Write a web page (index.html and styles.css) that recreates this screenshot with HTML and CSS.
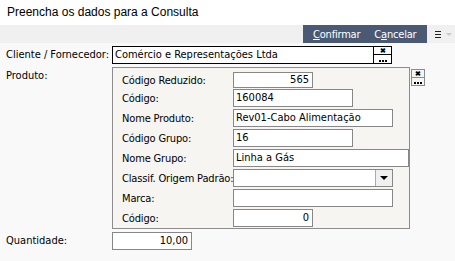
FILE: index.html
```html
<!DOCTYPE html>
<html lang="pt">
<head>
  <meta charset="UTF-8">
  <title>Preencha os dados para a Consulta</title>
  <link rel="stylesheet" href="styles.css">
</head>
<body>
  <div class="title">Preencha os dados para a Consulta</div>

  <div class="toolbar">
    <div class="actions">
      <button class="action"><u>C</u>onfirmar</button>
      <button class="action">C<u>a</u>ncelar</button>
    </div>
    <div class="menu">
      <span class="bars"></span>
      <span class="caret"></span>
    </div>
  </div>

  <div class="form">
    <div class="row">
      <label class="label">Cliente / Fornecedor:</label>
      <div class="lookup">
        <div class="lookup-text">Comércio e Representações Ltda</div>
        <div class="mini-btns">
          <button class="mini">&#x2716;</button>
          <button class="mini dots"><span class="dot-row"></span></button>
        </div>
      </div>
    </div>

    <div class="row product-row">
      <label class="label">Produto:</label>
      <div class="panel">
        <div class="prow first">
          <span class="plabel">Código Reduzido:</span>
          <div class="field num w80">565</div>
        </div>
        <div class="prow">
          <span class="plabel">Código:</span>
          <div class="field w120">160084</div>
        </div>
        <div class="prow">
          <span class="plabel">Nome Produto:</span>
          <div class="field w160">Rev01-Cabo Alimentação</div>
        </div>
        <div class="prow">
          <span class="plabel">Código Grupo:</span>
          <div class="field w120">16</div>
        </div>
        <div class="prow">
          <span class="plabel">Nome Grupo:</span>
          <div class="field w176">Linha a Gás</div>
        </div>
        <div class="prow">
          <span class="plabel">Classif. Origem Padrão:</span>
          <div class="field combo w160">
            <span class="combo-text"></span>
            <span class="drop"></span>
          </div>
        </div>
        <div class="prow">
          <span class="plabel">Marca:</span>
          <div class="field w160"></div>
        </div>
        <div class="prow">
          <span class="plabel">Código:</span>
          <div class="field num w80">0</div>
        </div>
      </div>
      <div class="mini-btns side">
        <button class="mini">&#x2716;</button>
        <button class="mini dots"><span class="dot-row"></span></button>
      </div>
    </div>

    <div class="row qty-row">
      <label class="label">Quantidade:</label>
      <div class="field num w80">10,00</div>
    </div>
  </div>
</body>
</html>
```

FILE: styles.css
```css
body {
  margin: 0;
  background: #f9f9f9;
  font-family: "DejaVu Sans", sans-serif;
  font-stretch: condensed;
  font-size: 11px;
  color: #000;
}
.title {
  height: 25px;
  line-height: 25px;
  padding-left: 7px;
  background: #fff;
  font-family: "Liberation Sans", Arial, sans-serif;
  font-stretch: normal;
  font-size: 12px;
}
.toolbar {
  height: 18px;
  background: #f0f0f0;
  display: flex;
  justify-content: flex-end;
}
.actions {
  background: #4a5a74;
  width: 124px;
  display: flex;
  gap: 14px;
  padding-left: 10px;
  box-sizing: border-box;
}
.action {
  background: none;
  border: none;
  color: #fff;
  font-family: "DejaVu Sans", sans-serif;
  font-stretch: condensed;
  font-size: 11px;
  letter-spacing: -0.2px;
  padding: 0;
  height: 18px;
  cursor: pointer;
}
.menu {
  width: 28px;
  display: flex;
  align-items: center;
  gap: 5px;
  padding-left: 8px;
  box-sizing: border-box;
}
.bars {
  width: 6px;
  height: 7px;
  background: linear-gradient(#222 0 1px, transparent 1px 3px, #222 3px 4px, transparent 4px 6px, #222 6px 7px);
}
.caret {
  width: 0;
  height: 0;
  border-left: 3px solid transparent;
  border-right: 3px solid transparent;
  border-top: 3px solid #c8c8c8;
}
.form {
  padding: 3px 0 0 6px;
}
.row {
  display: flex;
  align-items: flex-start;
}
.label {
  width: 106px;
  line-height: 16px;
  padding-top: 1px;
  white-space: nowrap;
}
.lookup {
  width: 280px;
  height: 18px;
  box-sizing: border-box;
  border: 1px solid #000;
  background: #fff;
  display: flex;
}
.lookup-text {
  flex: 1;
  padding-left: 2px;
  line-height: 16px;
}
.mini-btns {
  width: 17px;
  display: flex;
  flex-direction: column;
  border-left: 1px solid #000;
}
.mini {
  height: 8px;
  padding: 0;
  border: none;
  background: #fff;
  font-size: 7px;
  line-height: 7px;
  font-weight: bold;
  cursor: pointer;
  display: flex;
  justify-content: center;
  align-items: center;
}
.mini.dots {
  border-top: 1px solid #000;
  align-items: flex-end;
  padding-bottom: 1px;
  box-sizing: content-box;
  height: 7px;
}
.dot-row {
  width: 8px;
  height: 2px;
  background: repeating-linear-gradient(90deg, #000 0 2px, transparent 2px 3px);
}
.product-row {
  margin-top: 3px;
}
.panel {
  width: 298px;
  height: 162px;
  box-sizing: border-box;
  border: 1px solid #8c8c8c;
  background: #f6f5f1;
  padding: 4px 0 0 9px;
  display: flex;
  flex-direction: column;
  gap: 2px;
}
.prow {
  display: flex;
  align-items: center;
}
.prow.first {
  margin-bottom: -1px;
}
.plabel {
  width: 111px;
  letter-spacing: -0.15px;
  white-space: nowrap;
}
.field {
  height: 18px;
  box-sizing: border-box;
  border: 1px solid #878787;
  background: #fff;
  padding: 0 3px 0 2px;
  line-height: 16px;
  white-space: nowrap;
}
.prow.first .field {
  height: 16px;
  line-height: 14px;
}
.num {
  text-align: right;
}
.w80 { width: 80px; }
.w120 { width: 120px; }
.w160 { width: 160px; }
.w176 { width: 176px; }
.combo {
  display: flex;
  padding: 0;
}
.combo-text {
  flex: 1;
}
.drop {
  width: 16px;
  background: #f0f0f0;
  border-left: 1px solid #aaa;
  position: relative;
}
.drop::after {
  content: "";
  position: absolute;
  left: 4px;
  top: 6px;
  border-left: 4px solid transparent;
  border-right: 4px solid transparent;
  border-top: 4px solid #000;
}
.mini-btns.side {
  margin-top: 2px;
  margin-left: 1px;
  width: 14px;
  border: none;
}
.side .mini {
  background: #f6f5f1;
  border: 1px solid #8c8c8c;
  height: 9px;
  box-sizing: border-box;
}
.side .mini.dots {
  border-top: none;
  height: 8px;
}
.qty-row {
  margin-top: 3px;
}
```
